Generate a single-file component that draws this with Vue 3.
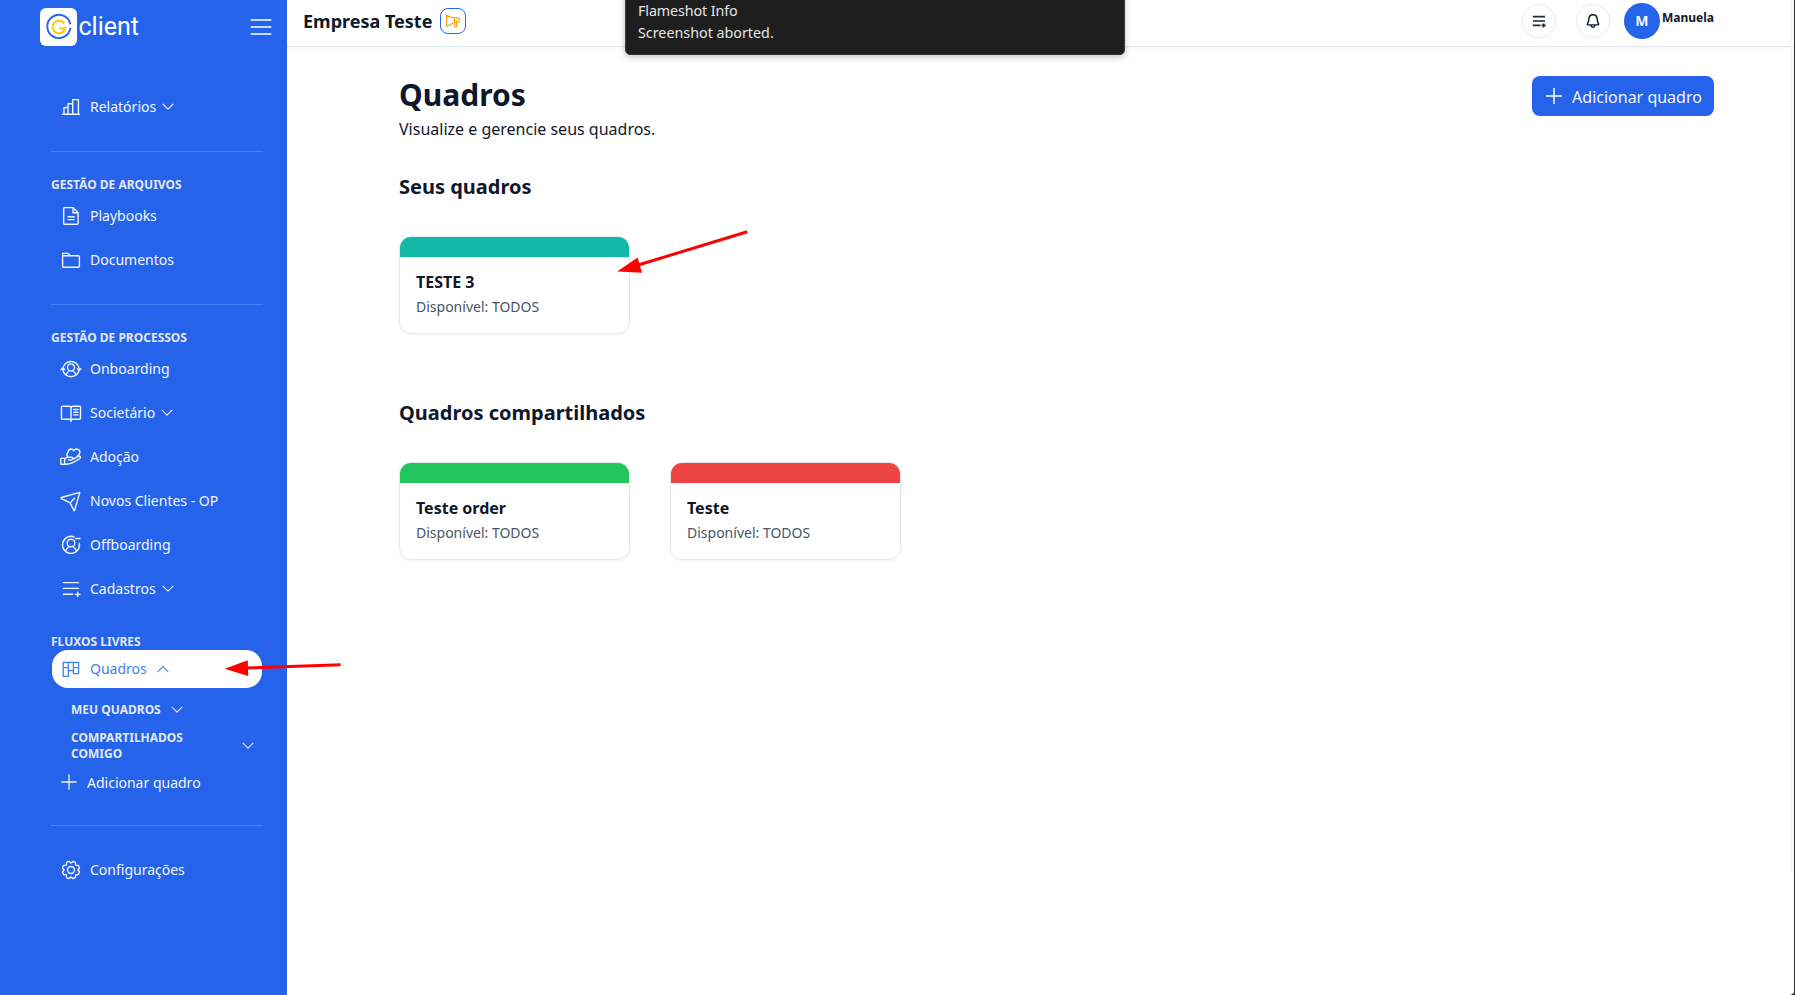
<script setup>
const fileItems = [
  { label: 'Playbooks', icon: 'file' },
  { label: 'Documentos', icon: 'folder' },
]
const processItems = [
  { label: 'Onboarding', icon: 'onboarding' },
  { label: 'Societário', icon: 'book', chevron: true },
  { label: 'Adoção', icon: 'hand' },
  { label: 'Novos Clientes - OP', icon: 'send' },
  { label: 'Offboarding', icon: 'offboarding' },
  { label: 'Cadastros', icon: 'list', chevron: true },
]
const sections = [
  { title: 'Seus quadros', boards: [{ name: 'TESTE 3', tone: 'teal' }] },
  {
    title: 'Quadros compartilhados',
    boards: [
      { name: 'Teste order', tone: 'green' },
      { name: 'Teste', tone: 'red' },
    ],
  },
]
const icons = {
  bars: 'M2.5 18.2H19.5M4 18V11.5H8M8 18V7.7H12.7M12.7 18V3.6H18.4V18',
  file: 'M13 2.6H4.6Q3.7 2.6 3.7 3.5V18.3Q3.7 19.2 4.6 19.2H17.2Q18.1 19.2 18.1 18.3V7.7ZM13 2.6V7.7H18.1M8 11.8H14.2M8 14.6H14.2',
  folder: 'M2.6 17.6V4.4H8.3L10.2 6.8H18.6Q19.4 6.8 19.4 7.6V17.6Q19.4 18.2 18.6 18.2H3.3Q2.6 18.2 2.6 17.6ZM2.6 6.8H10.2',
  onboarding:
    'M2.8 10.5A8.3 8.3 0 0 1 19.2 10.5M2.8 11.8A8.3 8.3 0 0 0 19.2 11.8M1 11.6L2.8 9.8L4.6 11.6M17.4 10.8L19.2 12.6L21 10.8M14.5 9.4A3.5 3.5 0 1 1 7.5 9.4A3.5 3.5 0 1 1 14.5 9.4M6 17.3Q7 13.8 9.2 12.9M16 17.3Q15 13.8 12.8 12.9',
  book: 'M11 5.3Q10.4 4.3 9 4.3H2.2Q1.5 4.3 1.5 5V16.6Q1.5 17.2 2.2 17.2H9.5Q11 17.2 11 19.5Q11 17.2 12.5 17.2H19.8Q20.5 17.2 20.5 16.6V5Q20.5 4.3 19.8 4.3H13Q11.6 4.3 11 5.3V18M13.7 7.5H18M13.7 10.2H18M13.7 12.9H18',
  hand: 'M0.8 12.4H4.6V18.3H0.8ZM4.6 13L7.4 11.2H11.4Q13.1 11.4 12.8 12.8Q12.5 13.9 11 14H8.5M12.8 13.2L18.5 10.4Q20.4 10 20.6 11.3Q20.6 12.2 19.2 13L13.2 16.3Q10.5 18.3 4.6 18.2M7.5 10.8Q6 8 8 6.2Q8.5 3.1 11.2 3Q12.9 3 13.7 4.7Q14.7 3 16.6 3Q19.8 3.4 19.9 6.2Q19.8 8.5 17 10.6',
  send: 'M1.2 7.5L19.8 2.4L14.6 20.4Q14.2 21 13.8 20.4L10.2 12.9L1.3 8.5Q0.7 8 1.2 7.5ZM10.2 12.9L14.5 8.2',
  offboarding:
    'M14 2.9A8.5 8.5 0 1 0 19.4 9.5M15.5 4.5H20M14.8 9A3.8 3.8 0 1 1 7.2 9A3.8 3.8 0 1 1 14.8 9M5.4 17.2Q6.6 14.2 8.7 12.7M16.6 17.2Q15.4 14.2 13.3 12.7',
  list: 'M3.4 4.6H18.6M3.4 10.4H18.6M3.4 16.3H12.6M17.7 14.2V18.6M15.4 16.4H20',
  board: 'M3.2 4.3H18.6V15.6H13.4V4.3M3.2 4.3V18.3H8.4V4.3M3.2 9.6H8.4M13.4 9.6H18.6M8.4 12.6H13.4',
}
const gear =
  'M8.9 2.4L11 4L13.1 2.4L15.4 3.4L15.7 6.1L18.4 6.5L19.5 9L17.9 11L19.5 13L18.4 15.5L15.7 15.9L15.4 18.6L13.1 19.6L11 18L8.9 19.6L6.6 18.6L6.3 15.9L3.6 15.5L2.5 13L4.1 11L2.5 9L3.6 6.5L6.3 6.1L6.6 3.4Z'
</script>

<template>
  <div class="app">
    <aside class="sidebar">
      <div class="brand">
        <div class="brand-logo">
          <svg width="38" height="38" viewBox="0 0 38 38" fill="none">
            <path d="M30.3 16.3A11.6 11.6 0 1 0 30.4 19.9" stroke="#2563eb" stroke-width="1.9" />
            <path d="M24.3 15.4A6.4 6.4 0 1 0 25.3 20.3H18.9" stroke="#facc15" stroke-width="2.2" />
          </svg>
        </div>
        <span class="brand-name">client</span>
        <svg class="burger" width="22" height="18" viewBox="0 0 22 18" stroke="#fff" stroke-width="1.7" stroke-linecap="round">
          <path d="M1.3 2H20.7M1.3 9H20.7M1.3 16H20.7" />
        </svg>
      </div>

      <nav class="nav">
        <a class="item">
          <svg class="icon" viewBox="0 0 22 22"><path :d="icons.bars" /></svg>
          <span>Relatórios</span>
          <svg class="chevron" viewBox="0 0 12 8"><path d="M1 1.2L6 6.2L11 1.2" /></svg>
        </a>
        <hr class="divider" />

        <h6 class="group">GESTÃO DE ARQUIVOS</h6>
        <div class="list">
          <a v-for="i in fileItems" :key="i.label" class="item">
            <svg class="icon" viewBox="0 0 22 22"><path :d="icons[i.icon]" /></svg>
            <span>{{ i.label }}</span>
          </a>
        </div>
        <hr class="divider" />

        <h6 class="group">GESTÃO DE PROCESSOS</h6>
        <div class="list">
          <a v-for="i in processItems" :key="i.label" class="item">
            <svg class="icon" viewBox="0 0 22 22"><path :d="icons[i.icon]" /></svg>
            <span>{{ i.label }}</span>
            <svg v-if="i.chevron" class="chevron" viewBox="0 0 12 8"><path d="M1 1.2L6 6.2L11 1.2" /></svg>
          </a>
        </div>

        <h6 class="group flows">FLUXOS LIVRES</h6>
        <a class="item active">
          <svg class="icon" viewBox="0 0 22 22"><path :d="icons.board" /></svg>
          <span>Quadros</span>
          <svg class="chevron" viewBox="0 0 12 8"><path d="M1 6.6L6 1.6L11 6.6" /></svg>
        </a>
        <div class="sub mine">
          <span>MEU QUADROS</span>
          <svg class="chevron" viewBox="0 0 12 8"><path d="M1 1.2L6 6.2L11 1.2" /></svg>
        </div>
        <div class="sub shared">
          <span>COMPARTILHADOS COMIGO</span>
          <svg class="chevron" viewBox="0 0 12 8"><path d="M1 1.2L6 6.2L11 1.2" /></svg>
        </div>
        <a class="add">
          <svg width="16" height="16" viewBox="0 0 16 16"><path d="M8 .8V15.2M.8 8H15.2" /></svg>
          <span>Adicionar quadro</span>
        </a>
        <hr class="divider last" />
        <a class="item">
          <svg class="icon" viewBox="0 0 22 22"><path :d="gear" /><circle cx="11" cy="11" r="3.5" /></svg>
          <span>Configurações</span>
        </a>
      </nav>
    </aside>

    <div class="page">
      <header class="topbar">
        <strong class="company">Empresa Teste</strong>
        <button class="announce">
          <svg width="16" height="16" viewBox="0 0 16 16" fill="none" stroke="#f59e0b" stroke-width="1.1" stroke-linejoin="round">
            <path d="M1.6 1.8V13.6M1.6 2.2L7.2 4.8H12.2Q14.6 5.2 14.6 7.3Q14.4 9.4 12 9.7H9.4M1.6 13.2L8 10.2M9.4 4.8V10.7L10 13.8H11.8L11.3 7.3H9.4" />
          </svg>
        </button>
        <div class="user-tools">
          <button class="round">
            <svg width="16" height="16" viewBox="0 0 16 16" stroke="#1e293b" stroke-width="1.7" fill="none">
              <path d="M1.8 3.7H14M1.8 8H14M1.8 12.4H9.6M12.6 10.4V14.4M10.6 12.4H14.6" />
            </svg>
          </button>
          <button class="round">
            <svg width="16" height="16" viewBox="0 0 16 16" stroke="#0f172a" stroke-width="1.4" fill="none" stroke-linejoin="round">
              <path d="M8 1.7C5.3 1.7 3.9 3.7 3.8 6.2C3.7 9 3 9.6 2.4 10.8Q2.1 11.9 3.1 11.9H12.9Q13.9 11.9 13.6 10.8C13 9.6 12.3 9 12.2 6.2C12.1 3.7 10.7 1.7 8 1.7ZM6 12.2Q6.2 14.2 8 14.2Q9.8 14.2 10 12.2" />
            </svg>
          </button>
          <span class="avatar">M</span>
          <span class="user">Manuela</span>
        </div>
      </header>

      <main class="content">
        <div class="heading">
          <div>
            <h1>Quadros</h1>
            <p>Visualize e gerencie seus quadros.</p>
          </div>
          <button class="primary">
            <svg width="16" height="16" viewBox="0 0 16 16" stroke="#fff" stroke-width="1.5"><path d="M8 0V16M0 8H16" /></svg>
            <span>Adicionar quadro</span>
          </button>
        </div>
        <section v-for="s in sections" :key="s.title" class="section">
          <h2>{{ s.title }}</h2>
          <div class="grid">
            <article v-for="b in s.boards" :key="b.name" class="card">
              <div class="strip" :class="b.tone"></div>
              <div class="card-body">
                <h3>{{ b.name }}</h3>
                <p>Disponível: TODOS</p>
              </div>
            </article>
          </div>
        </section>
      </main>
    </div>

    <div class="scroll-track"></div>
    <div class="edge"></div>

    <div class="toast">
      <div class="toast-title">Flameshot Info</div>
      <div class="toast-text">Screenshot aborted.</div>
    </div>

    <svg class="marks" width="1795" height="995" viewBox="0 0 1795 995">
      <path d="M747.3 231.7L635 266" stroke="#f00" stroke-width="3" />
      <path d="M617.2 271.6L637.6 257.6L642 272.7Z" fill="#f00" />
      <path d="M340.6 664.8L245 668" stroke="#f00" stroke-width="3" />
      <path d="M224.6 668.8L247.8 660.3L248.2 676Z" fill="#f00" />
      <path d="M1795 990V995H1789.500Q1794 994.500 1795 990Z" fill="#2b2b2b" />
    </svg>
  </div>
</template>

<style>
body {
  overflow: hidden;
  background: #fff;
}
</style>

<style scoped>
.app {
  position: relative;
  display: flex;
  width: 1795px;
  height: 995px;
  overflow: hidden;
  font-family: 'Noto Sans', sans-serif;
  color: #0f172a;
}
.app * {
  box-sizing: border-box;
}
h1, h2, h3, h6, p {
  margin: 0;
}
button {
  font: inherit;
  padding: 0;
  display: flex;
  align-items: center;
  justify-content: center;
}
.sidebar {
  width: 287px;
  flex: none;
  background: #2563eb;
}
.brand {
  display: flex;
  align-items: center;
  height: 54px;
  padding: 0 15px 0 39.5px;
}
.brand-logo {
  width: 37.5px;
  height: 38px;
  border-radius: 6px;
  background: #fff;
}
.brand-name {
  margin-left: 1.5px;
  font: 400 25px/38px Roboto, sans-serif;
  color: #fff;
}
.burger {
  margin-left: auto;
}
.nav {
  padding: 34px 24px 0 51px;
}
.item {
  display: flex;
  align-items: center;
  height: 38px;
  padding-left: 9px;
  border-radius: 16px;
  font-size: 14px;
  line-height: 20px;
  color: #f1f5f9;
}
.icon {
  width: 22px;
  height: 22px;
  margin-right: 8px;
}
.icon, .chevron, .add svg {
  flex: none;
  fill: none;
  stroke: currentColor;
  stroke-width: 1.4;
  stroke-linejoin: round;
  stroke-linecap: round;
}
.chevron {
  width: 12px;
  height: 8px;
  margin-left: 6px;
  stroke-width: 1.1;
}
.add svg {
  stroke-width: 1.3;
}
.divider {
  height: 1px;
  margin: 25px 0;
  border: 0;
  background: #3b82f6;
}
.group {
  height: 16px;
  margin-bottom: 4px;
  font-size: 12px;
  font-weight: 700;
  line-height: 16px;
  color: #e2e8f0;
}
.list {
  display: flex;
  flex-direction: column;
  gap: 6px;
}
.group.flows {
  margin: 26px 0 0;
}
.item.active {
  margin: 0 1px;
  padding-left: 8px;
  background: #fff;
  color: #3b82f6;
}
.active .chevron {
  margin-left: 10px;
}
.active .icon {
  stroke-width: 1.3;
}
.sub {
  display: flex;
  align-items: center;
  padding-left: 20px;
  font-size: 12px;
  font-weight: 700;
  line-height: 16px;
  color: #e2e8f0;
}
.mine {
  margin-top: 14px;
}
.mine .chevron {
  margin-left: 10px;
}
.shared {
  margin-top: 12px;
  justify-content: space-between;
  padding-right: 9px;
}
.shared span {
  width: 130px;
}
.add {
  display: flex;
  align-items: center;
  gap: 10px;
  height: 38px;
  margin-top: 1px;
  padding-left: 10px;
  font-size: 14px;
  color: #f1f5f9;
}
.divider.last {
  margin: 24px 0 25px;
}
.page {
  flex: 1;
}
.topbar {
  display: flex;
  align-items: center;
  height: 47px;
  padding: 0 81px 4px 16px;
  border-bottom: 1px solid #e2e8f0;
  box-shadow: 0 1px 2px rgba(0, 0, 0, 0.05);
}
.company {
  font-size: 18px;
  line-height: 28px;
  font-weight: 700;
}
.announce {
  width: 26px;
  height: 26px;
  margin-left: 8px;
  border: 1px solid #2563eb;
  border-radius: 8px;
  background: #fff;
}
.user-tools {
  display: flex;
  align-items: center;
  margin-left: auto;
}
.round {
  width: 34px;
  height: 34px;
  margin-right: 20px;
  border: 1px solid #e2e8f0;
  border-radius: 50%;
  background: #fff;
}
.avatar {
  width: 36px;
  height: 36px;
  margin-left: -6px;
  border-radius: 50%;
  background: #2563eb;
  color: #f1f5f9;
  font-size: 14px;
  font-weight: 700;
  line-height: 36px;
  text-align: center;
}
.user {
  margin: 0 0 7px 2px;
  font-size: 12px;
  font-weight: 700;
  line-height: 16px;
}
.content {
  padding: 29px 81px 0 112px;
}
.heading {
  display: flex;
  justify-content: space-between;
  align-items: flex-start;
  height: 64px;
}
h1 {
  font-size: 30px;
  font-weight: 700;
  line-height: 38px;
}
.heading p {
  margin-top: 3px;
  font-size: 16px;
  line-height: 24px;
}
.primary {
  width: 182px;
  height: 40px;
  gap: 10px;
  padding-left: 2px;
  border: 0;
  border-radius: 8px;
  background: #2563eb;
  color: #f1f5f9;
  font-size: 16px;
}
.primary span {
  padding-top: 2px;
}
.section {
  margin-top: 33px;
}
.section + .section {
  margin-top: 65px;
}
h2 {
  font-size: 20px;
  font-weight: 700;
  line-height: 28px;
}
.grid {
  display: grid;
  grid-template-columns: repeat(5, 1fr);
  gap: 40px;
  margin-top: 35px;
}
.card {
  height: 98px;
  border: 1px solid #e2e8f0;
  border-radius: 12px;
  overflow: hidden;
  box-shadow: 0 1px 2px rgba(0, 0, 0, 0.05);
}
.strip {
  height: 20px;
}
.teal { background: #14b8a6; }
.green { background: #22c55e; }
.red { background: #ef4444; }
.card-body {
  padding: 13px 16px;
}
h3 {
  font-size: 16px;
  font-weight: 700;
  line-height: 24px;
}
.card-body p {
  margin-top: 3px;
  font-size: 14px;
  line-height: 20px;
  color: #475569;
}
.scroll-track {
  position: absolute;
  top: 0;
  right: 2px;
  width: 3px;
  height: 872px;
  background: #f6f6f6;
}
.edge {
  position: absolute;
  top: 0;
  right: 0;
  width: 1px;
  height: 995px;
  background: #2b2b2b;
}
.toast {
  position: absolute;
  left: 625px;
  top: -10px;
  width: 500px;
  height: 65px;
  padding: 9px 12px;
  border: 1px solid #3a3a3a;
  border-radius: 5px;
  background: #1e1e1e;
  box-shadow: 0 2px 6px rgba(0, 0, 0, 0.25);
  color: #e5e5e5;
  font-size: 14.3px;
  line-height: 22px;
}
.toast-title {
  letter-spacing: -0.1px;
}
.marks {
  position: absolute;
  inset: 0;
  pointer-events: none;
}
</style>
